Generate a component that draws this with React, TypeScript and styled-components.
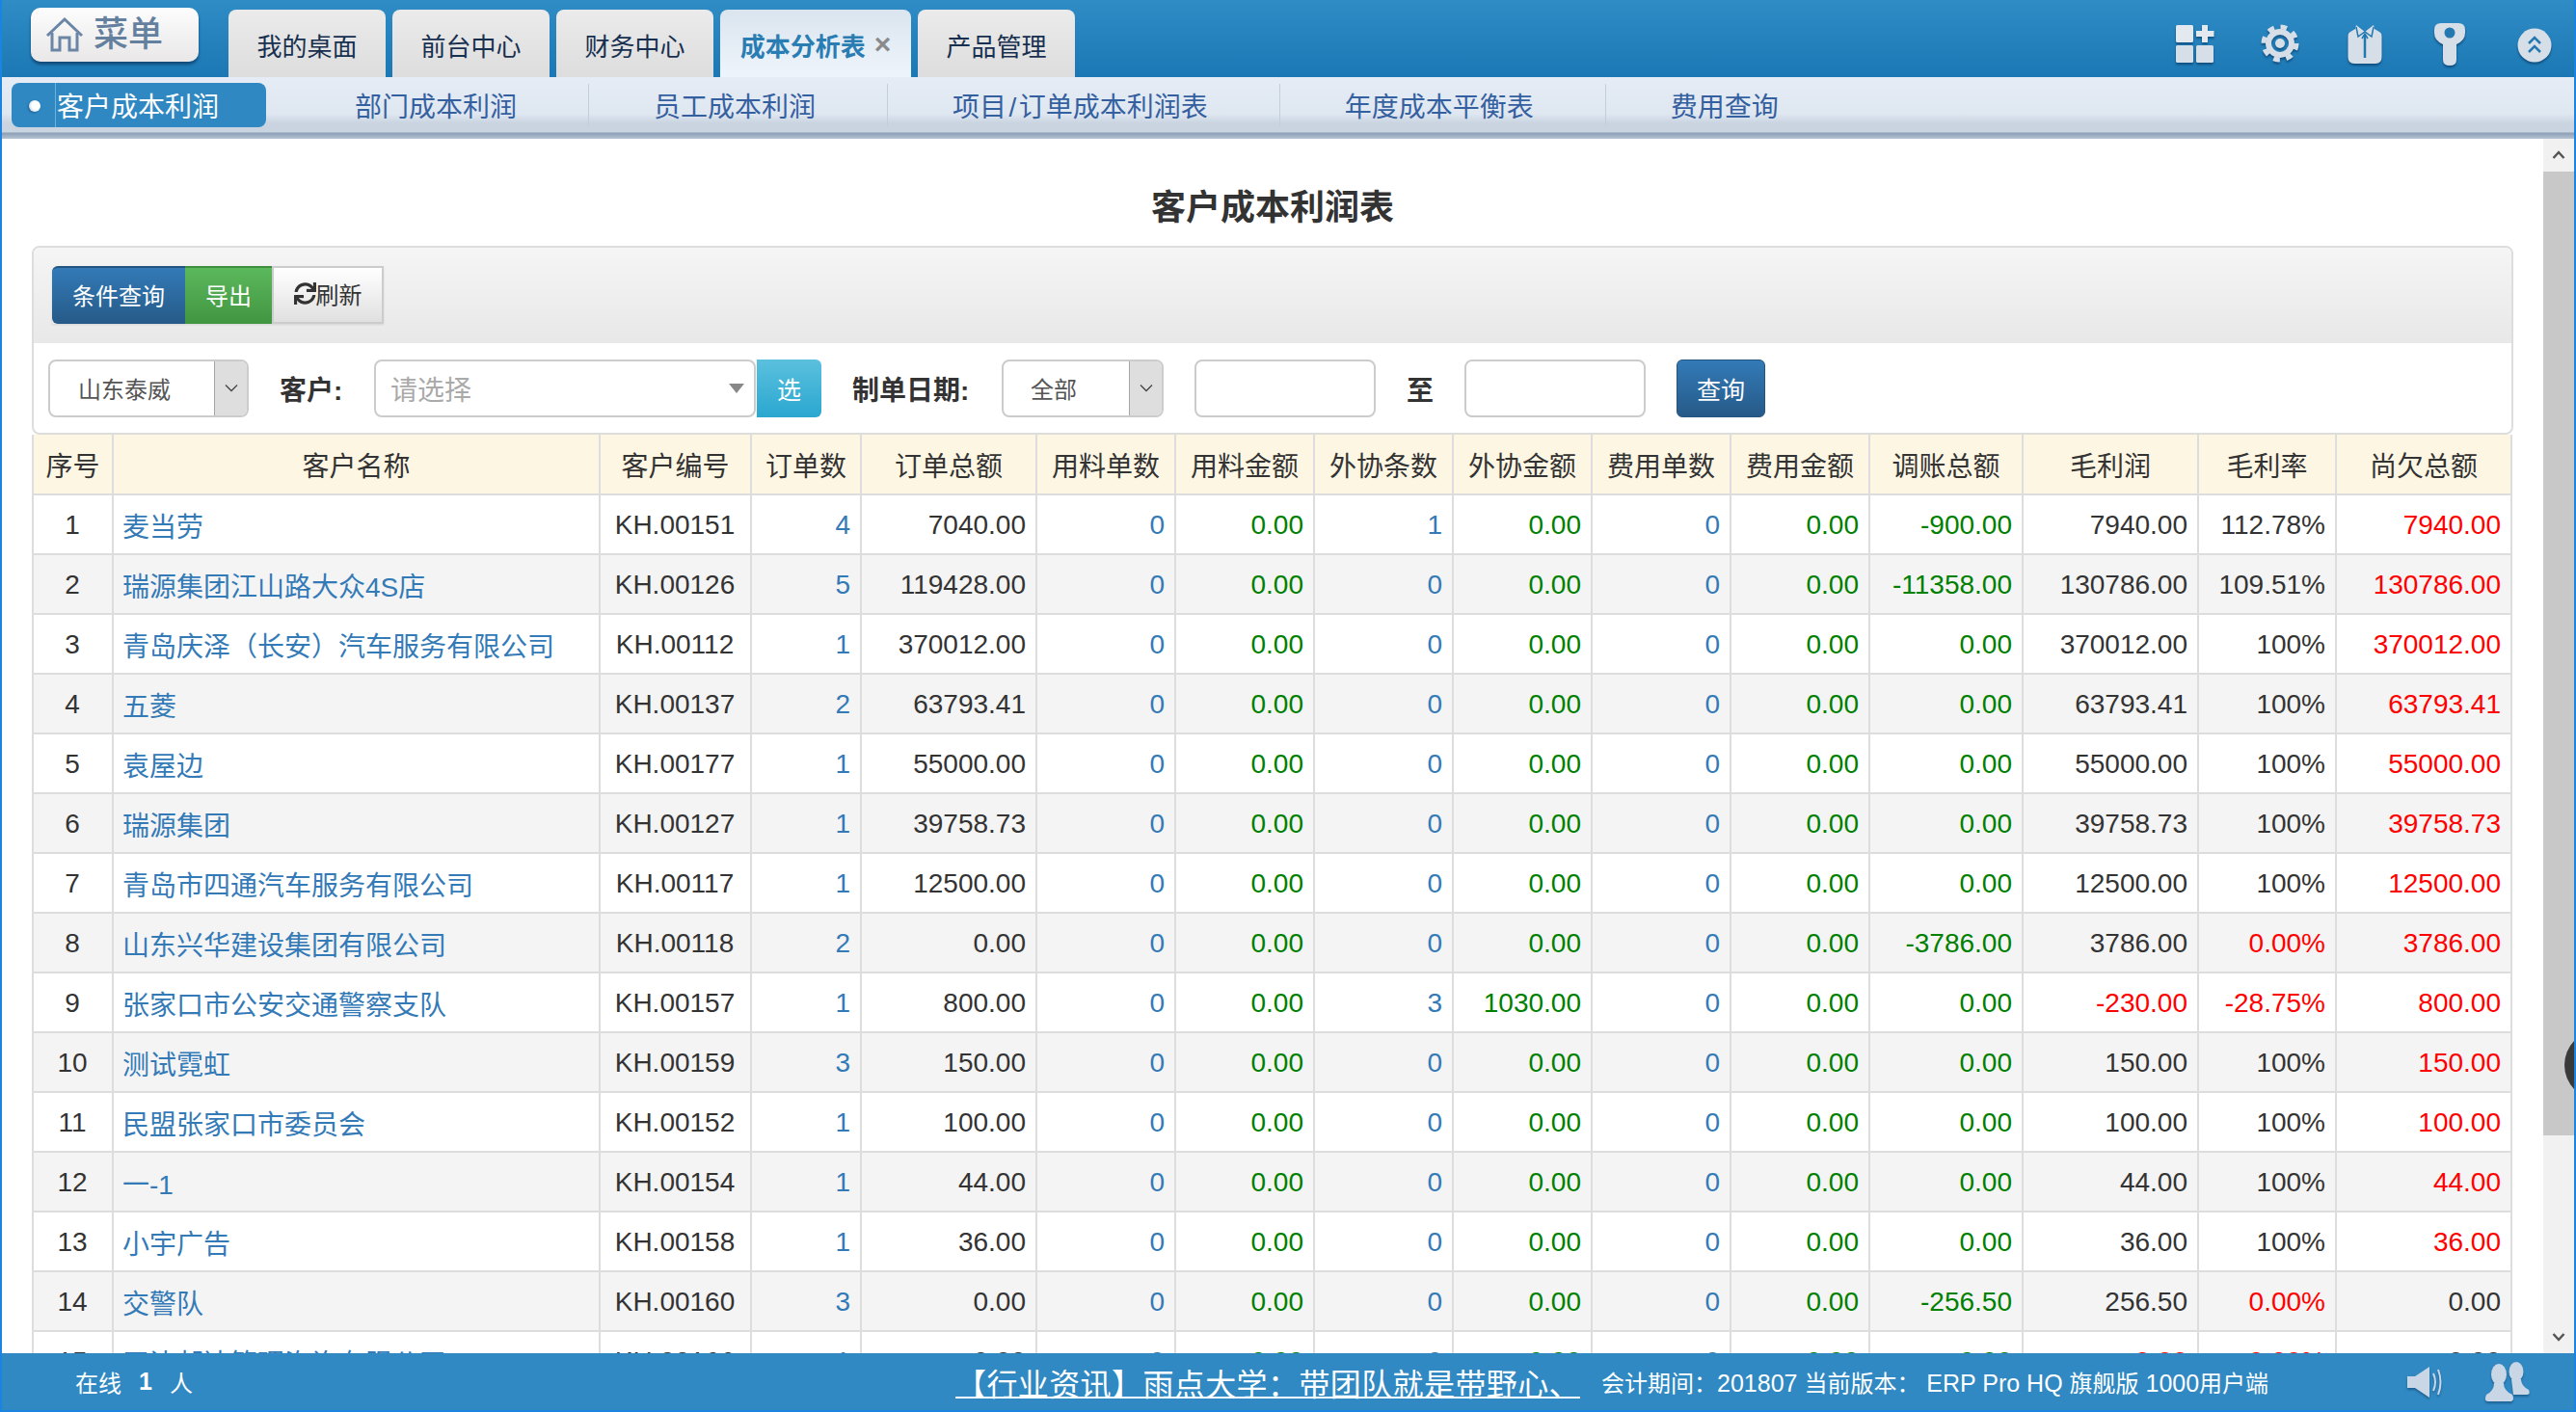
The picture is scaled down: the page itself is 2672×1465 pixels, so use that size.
import React from "react";
import styled, { createGlobalStyle, css } from "styled-components";
import { FaSync } from "react-icons/fa";

const GlobalStyle = createGlobalStyle`
  html, body {
    margin: 0;
    height: 100%;
    overflow: hidden;
    background: #fff;
  }
  body {
    font-family: "Liberation Sans", "Noto Sans CJK SC", Arial, sans-serif;
    color: #333;
  }
  * {
    box-sizing: border-box;
  }
`;

const Page = styled.div`
  position: relative;
  display: flex;
  flex-direction: column;
  width: 100vw;
  height: 100vh;
  border-left: 2px solid #1a84e0;
  border-right: 2px solid #1a84e0;
  border-bottom: 2px solid #1a84e0;
  overflow: hidden;
`;

/* top bar */
const TopBar = styled.header`
  display: flex;
  flex: 0 0 80px;
  align-items: flex-start;
  background: linear-gradient(#2f8cc5, #1c78b4);
`;

const MenuButton = styled.div`
  display: flex;
  align-items: center;
  gap: 10px;
  width: 174px;
  height: 56px;
  margin: 8px 0 0 30px;
  padding-left: 15px;
  border-radius: 10px;
  background: linear-gradient(#fdfdfd, #e9e7e7);
  box-shadow: 0 3px 3px rgba(10, 50, 90, 0.65);
  color: #64809f;
  font-size: 36px;
  font-weight: 500;
  line-height: 1;
`;

const Tabs = styled.nav`
  display: flex;
  gap: 7px;
  margin: 10px 0 0 31px;
`;

const Tab = styled.div<{ $active?: boolean }>`
  display: flex;
  align-items: center;
  justify-content: center;
  gap: 9px;
  width: ${({ $active }) => ($active ? "198px" : "163px")};
  height: 70px;
  padding-top: 2px;
  border-radius: 8px 8px 0 0;
  background: linear-gradient(#ebebeb, #dedddd);
  color: #17304f;
  font-size: 26px;

  ${({ $active }) =>
    $active &&
    css`
      background: linear-gradient(#dbe5ef, #eef4fb);
      color: #2a7db3;
      font-weight: 700;
    `}
`;

const TabClose = styled.span`
  color: #8a8a8a;
  font-size: 30px;
  font-weight: 700;
  line-height: 1;
`;

const TopIcons = styled.div`
  display: flex;
  gap: 44px;
  margin: 23px 19px 0 auto;

  svg {
    filter: drop-shadow(0 2px 1px rgba(0, 40, 80, 0.55));
  }
`;

/* second level menu */
const SubBar = styled.nav`
  display: flex;
  flex: 0 0 64px;
  align-items: flex-start;
  padding: 6px 0 0 10px;
  background: linear-gradient(
    #e5ecf5 0,
    #dfe7f1 38px,
    #c9d4e0 48px,
    #c9d4e0 57px,
    #8c9fb6 58px,
    #b6c3d3 64px
  );
`;

const SubActive = styled.div`
  display: flex;
  align-items: stretch;
  width: 264px;
  height: 46px;
  border-radius: 8px;
  background: #2f88c2;
  color: #fff;
  font-size: 28px;
`;

const SubBullet = styled.span`
  flex: 0 0 12px;
  height: 12px;
  margin: 18px 15px 0 18px;
  border-radius: 50%;
  background: radial-gradient(circle at 60% 45%, #fff 40%, #a9c4dc 100%);
  box-shadow: -1px 1px 2px rgba(20, 60, 100, 0.5);
`;

const SubText = styled.span`
  padding: 6px 0 0 1px;
  border-left: 1px solid #6fb0da;
  line-height: 40px;
`;

const SubList = styled.div`
  display: flex;
  margin: 1px 0 0 25px;
`;

const SubItem = styled.div<{ $last?: boolean }>`
  height: 44px;
  padding: 5px 74px 0 67px;
  border-right: ${({ $last }) => ($last ? "none" : "1px solid #c3cedb")};
  color: #3560a0;
  font-size: 28px;
  line-height: 40px;
  white-space: nowrap;
`;

const SubSlash = styled.span`
  padding: 0 2.5px;
`;

/* main area */
const Body = styled.div`
  position: relative;
  display: flex;
  flex: 1;
  min-height: 0;
`;

const Content = styled.main`
  flex: 1;
  min-width: 0;
  padding: 0 31px;
  overflow: hidden;
`;

const Title = styled.h1`
  display: flex;
  align-items: center;
  justify-content: center;
  height: 111px;
  margin: 0;
  padding-top: 24px;
  color: #333;
  font-size: 36px;
  font-weight: 700;
`;

const Panel = styled.section`
  border: 2px solid #ddd;
  border-radius: 8px;
  background: #fff;
`;

const PanelHead = styled.div`
  display: flex;
  height: 99px;
  padding: 19px 0 0 19px;
  border-radius: 6px 6px 0 0;
  background: linear-gradient(#f5f5f5, #e8e8e8);
`;

const ButtonBar = styled.div`
  display: flex;
  height: 60px;
  box-shadow: 0 1px 2px rgba(0, 0, 0, 0.1);
`;

const toneStyles = {
  primary: css`
    border-top: 2px solid #245580;
    background: linear-gradient(#337ab7, #265a88);
    color: #fff;
  `,
  success: css`
    border-top: 2px solid #3e8f3e;
    background: linear-gradient(#5cb85c, #419641);
    color: #fff;
  `,
  plain: css`
    border: 2px solid #ccc;
    background: linear-gradient(#fff, #e0e0e0);
    color: #333;
  `,
};

const BarButton = styled.div<{ $tone: keyof typeof toneStyles; $width: number }>`
  display: flex;
  align-items: center;
  justify-content: center;
  width: ${({ $width }) => $width}px;
  padding-bottom: 4px;
  font-size: 24px;
  ${({ $tone }) => toneStyles[$tone]}

  &:first-child {
    border-radius: 6px 0 0 6px;
  }

  svg {
    font-size: 23px;
  }
`;

const FilterRow = styled.div`
  display: flex;
  align-items: center;
  gap: 32px;
  height: 93px;
  padding-left: 15px;
`;

const SelectBox = styled.div<{ $width: number; $indent: number }>`
  display: flex;
  align-items: center;
  justify-content: space-between;
  width: ${({ $width }) => $width}px;
  height: 60px;
  padding-left: ${({ $indent }) => $indent}px;
  border: 2px solid #ccc;
  border-radius: 8px;
  color: #555;
  font-size: 24px;
`;

const SelectArrow = styled.span`
  display: flex;
  align-items: center;
  justify-content: center;
  width: 34px;
  height: 100%;
  border-left: 1px solid #a5a5a5;
  border-radius: 0 6px 6px 0;
  background: #dedede;
`;

const FieldLabel = styled.label<{ $width: number }>`
  width: ${({ $width }) => $width}px;
  color: #333;
  font-size: 28px;
  font-weight: 700;
  white-space: nowrap;
`;

const PickerGroup = styled.div`
  display: flex;
  gap: 1px;
  width: 464px;
  height: 60px;
`;

const Picker = styled.div`
  display: flex;
  flex: 1;
  align-items: center;
  justify-content: space-between;
  padding: 0 10px 0 15px;
  border: 2px solid #ccc;
  border-radius: 8px;
  color: #aaa;
  font-size: 28px;
`;

const PickerCaret = styled.span`
  width: 0;
  height: 0;
  border-left: 8px solid transparent;
  border-right: 8px solid transparent;
  border-top: 10px solid #888;
`;

const PickButton = styled.div`
  display: flex;
  align-items: center;
  justify-content: center;
  width: 67px;
  border-radius: 0 6px 6px 0;
  background: linear-gradient(#5bc0de, #2aa7d0);
  color: #fff;
  font-size: 25px;
`;

const DateBox = styled.div`
  width: 188px;
  height: 60px;
  border: 2px solid #ccc;
  border-radius: 8px;
`;

const SearchButton = styled.div`
  display: flex;
  align-items: center;
  justify-content: center;
  width: 92px;
  height: 60px;
  border: 1px solid #245580;
  border-radius: 6px;
  background: linear-gradient(#337ab7, #265a88);
  color: #fff;
  font-size: 25px;
`;

/* table */
const Grid = styled.table`
  width: 2573px;
  table-layout: fixed;
  border-collapse: separate;
  border-spacing: 0;
  font-size: 28px;
`;

const HeadCell = styled.th`
  height: 63px;
  padding: 0;
  border-right: 2px solid #ddd;
  border-bottom: 2px solid #ddd;
  background: #fdf6e3;
  color: #333;
  font-weight: 400;
  text-align: center;

  &:first-child {
    border-left: 2px solid #ddd;
  }
`;

const Row = styled.tr`
  &:nth-child(even) td {
    background: #f4f4f4;
  }
`;

const toneColors = {
  dark: "#333",
  link: "#337ab7",
  good: "#008000",
  bad: "#f00",
};

const Cell = styled.td<{ $align?: string; $tone?: keyof typeof toneColors }>`
  height: 62px;
  padding: 2px 10px 0 9px;
  border-right: 2px solid #ddd;
  border-bottom: 2px solid #ddd;
  background: #fff;
  color: ${({ $tone }) => toneColors[$tone || "dark"]};
  text-align: ${({ $align }) => $align || "right"};
  white-space: nowrap;

  &:first-child {
    border-left: 2px solid #ddd;
  }
`;

const NameLink = styled.a`
  color: #337ab7;
  text-decoration: none;
`;

/* fake scrollbar */
const ScrollTrack = styled.aside`
  display: flex;
  flex: 0 0 32px;
  flex-direction: column;
  background: #f1f1f1;
`;

const ScrollArrow = styled.div`
  display: flex;
  flex: 0 0 34px;
  align-items: center;
  justify-content: center;
`;

const ScrollThumb = styled.div`
  flex: 0 0 1000px;
  background: #c8c8c8;
`;

const ScrollSpace = styled.div`
  flex: 1;
`;

const EdgeHandle = styled.div`
  position: absolute;
  top: 925px;
  right: -62px;
  width: 72px;
  height: 72px;
  border-radius: 50%;
  background: #3a3a3a;
`;

/* status bar */
const Footer = styled.footer`
  position: relative;
  display: flex;
  flex: 0 0 59px;
  align-items: center;
  background: #3089c2;
  color: #fff;
  font-size: 24px;
`;

const Online = styled.div`
  display: flex;
  flex: 0 0 989px;
  align-items: center;
  gap: 18px;
  padding-left: 76px;
`;

const OnlineCount = styled.span`
  font-size: 25px;
  font-weight: 700;
`;

const Ticker = styled.a`
  flex: 0 0 648px;
  color: #fff;
  font-size: 32px;
  letter-spacing: 0.4px;
  text-decoration: underline;
  text-decoration-thickness: 2px;
  text-underline-offset: 1px;
  white-space: nowrap;
`;

const Info = styled.div`
  margin-left: 22px;
  font-size: 25px;
  white-space: nowrap;
`;

const InfoCjk = styled.span`
  font-size: 24px;
`;

const FooterIcons = styled.div`
  display: flex;
  align-items: center;
  gap: 43px;
  margin: 0 45px 0 auto;

  svg {
    filter: drop-shadow(0 2px 1px rgba(0, 40, 80, 0.4));
  }
`;

const ICON = "#d6deE7";
const ICON_CUT = "#2478b0";

const GridPlusIcon = () => (
  <svg width="44" height="44" viewBox="0 0 44 44">
    <rect x="2" y="3" width="18" height="18" rx="1.5" fill="#e4e9ef" />
    <rect x="2" y="24" width="18" height="18" rx="1.5" fill={ICON} />
    <rect x="23" y="24" width="18" height="18" rx="1.5" fill={ICON} />
    <path d="M29 3h6v6h6.500v6H35v6h-6v-6h-6V9h6z" fill="#e4e9ef" />
  </svg>
);

const GearIcon = () => (
  <svg width="44" height="44" viewBox="0 0 44 44">
    <circle cx="22" cy="22" r="17" fill="none" stroke={ICON} strokeWidth="5" strokeDasharray="6.700 6.650" />
    <circle cx="22" cy="22" r="12" fill="none" stroke={ICON} strokeWidth="6" />
    <circle cx="22" cy="22" r="5" fill={ICON} />
  </svg>
);

const ShirtIcon = () => (
  <svg width="44" height="44" viewBox="0 0 44 44">
    <path
      d="M7 10 L12 7 L13 3 L22 10 L31 3 L32 7 L37 10 Q39.500 11 39.500 15 V36 Q39.500 43 33 43 H11 Q4.500 43 4.500 36 V15 Q4.500 11 7 10 Z"
      fill={ICON}
    />
    <path d="M13 5 L15 15 L22 10 L29 15 L31 5" fill="none" stroke={ICON_CUT} strokeWidth="1.500" />
    <path d="M22 13 V37" stroke={ICON_CUT} strokeWidth="2.500" />
    <path d="M19 17 L22 12 L25 17" fill="none" stroke={ICON_CUT} strokeWidth="1.500" />
  </svg>
);

const KeyIcon = () => (
  <svg width="44" height="46" viewBox="0 0 44 46">
    <path
      d="M13 1 H31 Q38 1 38 8 V11 Q38 19 29 23 V39 Q29 45 22 45 Q15 45 15 39 V23 Q6 19 6 11 V8 Q6 1 13 1 Z"
      fill={ICON}
    />
    <circle cx="22" cy="11" r="5.500" fill={ICON_CUT} />
  </svg>
);

const UpCircleIcon = () => (
  <svg width="44" height="44" viewBox="0 0 44 44">
    <circle cx="22" cy="24" r="17.500" fill={ICON} />
    <path d="M16 22 L22 16 L28 22 M16 31 L22 25 L28 31" fill="none" stroke={ICON_CUT} strokeWidth="2.500" />
  </svg>
);

const HouseIcon = () => (
  <svg width="40" height="38" viewBox="0 0 40 38" fill="none" stroke="#6a85a5" strokeWidth="3">
    <path d="M2 20 L20 3 L38 20" />
    <path d="M7 17 V35 H15 V22 H25 V35 H33 V17" />
  </svg>
);

const Chevron = ({ down }: { down?: boolean }) => (
  <svg width="14" height="10" viewBox="0 0 14 10">
    <path d={down ? "M1.500 2 L7 8 L12.500 2" : "M1.500 8 L7 2 L12.500 8"} fill="none" stroke="#555" strokeWidth="2.500" />
  </svg>
);

const SmallCaret = () => (
  <svg width="14" height="9" viewBox="0 0 14 9">
    <path d="M1 1.500 L7 7.500 L13 1.500" fill="none" stroke="#444" strokeWidth="1.300" />
  </svg>
);

const SpeakerIcon = () => (
  <svg width="38" height="36" viewBox="0 0 38 36">
    <path d="M1 12 H9 L24 2 V34 L9 24 H1 Z" fill="#c9d6e5" />
    <path d="M28 9 Q32 18 28 27 M33 5 Q38 18 33 31" fill="none" stroke="#c9d6e5" strokeWidth="2" />
  </svg>
);

const PeopleIcon = () => (
  <svg width="48" height="42" viewBox="0 0 48 42" fill="#c9d6e5">
    <ellipse cx="33" cy="10" rx="7.500" ry="10" />
    <path d="M28 18 H38 Q38 25 46 29 Q48 34 44 34 H30 Z" />
    <ellipse cx="15" cy="13" rx="8" ry="11" />
    <path d="M10 22 H20 Q20 30 29 34 Q32 41 26 41 H4 Q-1 41 2 34 Q10 30 10 22 Z" />
  </svg>
);

const columns = [
  { title: "序号", width: 85 },
  { title: "客户名称", width: 505 },
  { title: "客户编号", width: 157 },
  { title: "订单数", width: 114 },
  { title: "订单总额", width: 182 },
  { title: "用料单数", width: 144 },
  { title: "用料金额", width: 144 },
  { title: "外协条数", width: 144 },
  { title: "外协金额", width: 144 },
  { title: "费用单数", width: 144 },
  { title: "费用金额", width: 144 },
  { title: "调账总额", width: 159 },
  { title: "毛利润", width: 182 },
  { title: "毛利率", width: 143 },
  { title: "尚欠总额", width: 182 },
];

interface Customer {
  name: string;
  code: string;
  orders: number;
  total: string;
  outsourceCount?: number;
  outsourceSum?: string;
  adjust?: string;
  profit: string;
  rate: string;
  debt: string;
}

const customers: Customer[] = [
  { name: "麦当劳", code: "KH.00151", orders: 4, total: "7040.00", outsourceCount: 1, adjust: "-900.00", profit: "7940.00", rate: "112.78%", debt: "7940.00" },
  { name: "瑞源集团江山路大众4S店", code: "KH.00126", orders: 5, total: "119428.00", adjust: "-11358.00", profit: "130786.00", rate: "109.51%", debt: "130786.00" },
  { name: "青岛庆泽（长安）汽车服务有限公司", code: "KH.00112", orders: 1, total: "370012.00", profit: "370012.00", rate: "100%", debt: "370012.00" },
  { name: "五菱", code: "KH.00137", orders: 2, total: "63793.41", profit: "63793.41", rate: "100%", debt: "63793.41" },
  { name: "袁屋边", code: "KH.00177", orders: 1, total: "55000.00", profit: "55000.00", rate: "100%", debt: "55000.00" },
  { name: "瑞源集团", code: "KH.00127", orders: 1, total: "39758.73", profit: "39758.73", rate: "100%", debt: "39758.73" },
  { name: "青岛市四通汽车服务有限公司", code: "KH.00117", orders: 1, total: "12500.00", profit: "12500.00", rate: "100%", debt: "12500.00" },
  { name: "山东兴华建设集团有限公司", code: "KH.00118", orders: 2, total: "0.00", adjust: "-3786.00", profit: "3786.00", rate: "0.00%", debt: "3786.00" },
  { name: "张家口市公安交通警察支队", code: "KH.00157", orders: 1, total: "800.00", outsourceCount: 3, outsourceSum: "1030.00", profit: "-230.00", rate: "-28.75%", debt: "800.00" },
  { name: "测试霓虹", code: "KH.00159", orders: 3, total: "150.00", profit: "150.00", rate: "100%", debt: "150.00" },
  { name: "民盟张家口市委员会", code: "KH.00152", orders: 1, total: "100.00", profit: "100.00", rate: "100%", debt: "100.00" },
  { name: "一-1", code: "KH.00154", orders: 1, total: "44.00", profit: "44.00", rate: "100%", debt: "44.00" },
  { name: "小宇广告", code: "KH.00158", orders: 1, total: "36.00", profit: "36.00", rate: "100%", debt: "36.00" },
  { name: "交警队", code: "KH.00160", orders: 3, total: "0.00", adjust: "-256.50", profit: "256.50", rate: "0.00%", debt: "0.00" },
  { name: "天津邮达管理咨询有限公司", code: "KH.00166", orders: 1, total: "0.00", profit: "0.00", rate: "0.00%", debt: "0.00" },
];

const App: React.FC = () => {
  return (
    <Page>
      <GlobalStyle />
      <TopBar>
        <MenuButton>
          <HouseIcon />
          菜单
        </MenuButton>
        <Tabs>
          <Tab>我的桌面</Tab>
          <Tab>前台中心</Tab>
          <Tab>财务中心</Tab>
          <Tab $active>
            成本分析表
            <TabClose>×</TabClose>
          </Tab>
          <Tab>产品管理</Tab>
        </Tabs>
        <TopIcons>
          <GridPlusIcon />
          <GearIcon />
          <ShirtIcon />
          <KeyIcon />
          <UpCircleIcon />
        </TopIcons>
      </TopBar>

      <SubBar>
        <SubActive>
          <SubBullet />
          <SubText>客户成本利润</SubText>
        </SubActive>
        <SubList>
          <SubItem>部门成本利润</SubItem>
          <SubItem>员工成本利润</SubItem>
          <SubItem>项目<SubSlash>/</SubSlash>订单成本利润表</SubItem>
          <SubItem>年度成本平衡表</SubItem>
          <SubItem $last>费用查询</SubItem>
        </SubList>
      </SubBar>

      <Body>
        <Content>
          <Title>客户成本利润表</Title>
          <Panel>
            <PanelHead>
              <ButtonBar>
                <BarButton $tone="primary" $width={138}>条件查询</BarButton>
                <BarButton $tone="success" $width={90}>导出</BarButton>
                <BarButton $tone="plain" $width={116}>
                  <FaSync />
                  刷新
                </BarButton>
              </ButtonBar>
            </PanelHead>
            <FilterRow>
              <SelectBox $width={208} $indent={29}>
                山东泰威
                <SelectArrow><SmallCaret /></SelectArrow>
              </SelectBox>
              <FieldLabel $width={66}>客户:</FieldLabel>
              <PickerGroup>
                <Picker>
                  请选择
                  <PickerCaret />
                </Picker>
                <PickButton>选</PickButton>
              </PickerGroup>
              <FieldLabel $width={123}>制单日期:</FieldLabel>
              <SelectBox $width={168} $indent={28}>
                全部
                <SelectArrow><SmallCaret /></SelectArrow>
              </SelectBox>
              <DateBox />
              <FieldLabel $width={28}>至</FieldLabel>
              <DateBox />
              <SearchButton>查询</SearchButton>
            </FilterRow>
          </Panel>
          <Grid>
            <colgroup>
              {columns.map((col) => (
                <col key={col.title} width={col.width} />
              ))}
            </colgroup>
            <thead>
              <tr>
                {columns.map((col) => (
                  <HeadCell key={col.title}>{col.title}</HeadCell>
                ))}
              </tr>
            </thead>
            <tbody>
              {customers.map((c, i) => (
                <Row key={c.code}>
                  <Cell $align="center">{i + 1}</Cell>
                  <Cell $align="left"><NameLink>{c.name}</NameLink></Cell>
                  <Cell $align="center">{c.code}</Cell>
                  <Cell $tone="link">{c.orders}</Cell>
                  <Cell>{c.total}</Cell>
                  <Cell $tone="link">0</Cell>
                  <Cell $tone="good">0.00</Cell>
                  <Cell $tone="link">{c.outsourceCount ?? 0}</Cell>
                  <Cell $tone="good">{c.outsourceSum ?? "0.00"}</Cell>
                  <Cell $tone="link">0</Cell>
                  <Cell $tone="good">0.00</Cell>
                  <Cell $tone="good">{c.adjust ?? "0.00"}</Cell>
                  <Cell $tone={parseFloat(c.profit) <= 0 ? "bad" : "dark"}>{c.profit}</Cell>
                  <Cell $tone={parseFloat(c.rate) <= 0 ? "bad" : "dark"}>{c.rate}</Cell>
                  <Cell $tone={parseFloat(c.debt) > 0 ? "bad" : "dark"}>{c.debt}</Cell>
                </Row>
              ))}
            </tbody>
          </Grid>
        </Content>
        <ScrollTrack>
          <ScrollArrow><Chevron /></ScrollArrow>
          <ScrollThumb />
          <ScrollSpace />
          <ScrollArrow><Chevron down /></ScrollArrow>
        </ScrollTrack>
        <EdgeHandle />
      </Body>

      <Footer>
        <Online>
          <span>在线</span>
          <OnlineCount>1</OnlineCount>
          <span>人</span>
        </Online>
        <Ticker>【行业资讯】雨点大学：带团队就是带野心、</Ticker>
        <Info>
          <InfoCjk>会计期间：</InfoCjk>201807 <InfoCjk>当前版本：</InfoCjk> ERP Pro HQ <InfoCjk>旗舰版</InfoCjk> 1000<InfoCjk>用户端</InfoCjk>
        </Info>
        <FooterIcons>
          <SpeakerIcon />
          <PeopleIcon />
        </FooterIcons>
      </Footer>
    </Page>
  );
};

export default App;
